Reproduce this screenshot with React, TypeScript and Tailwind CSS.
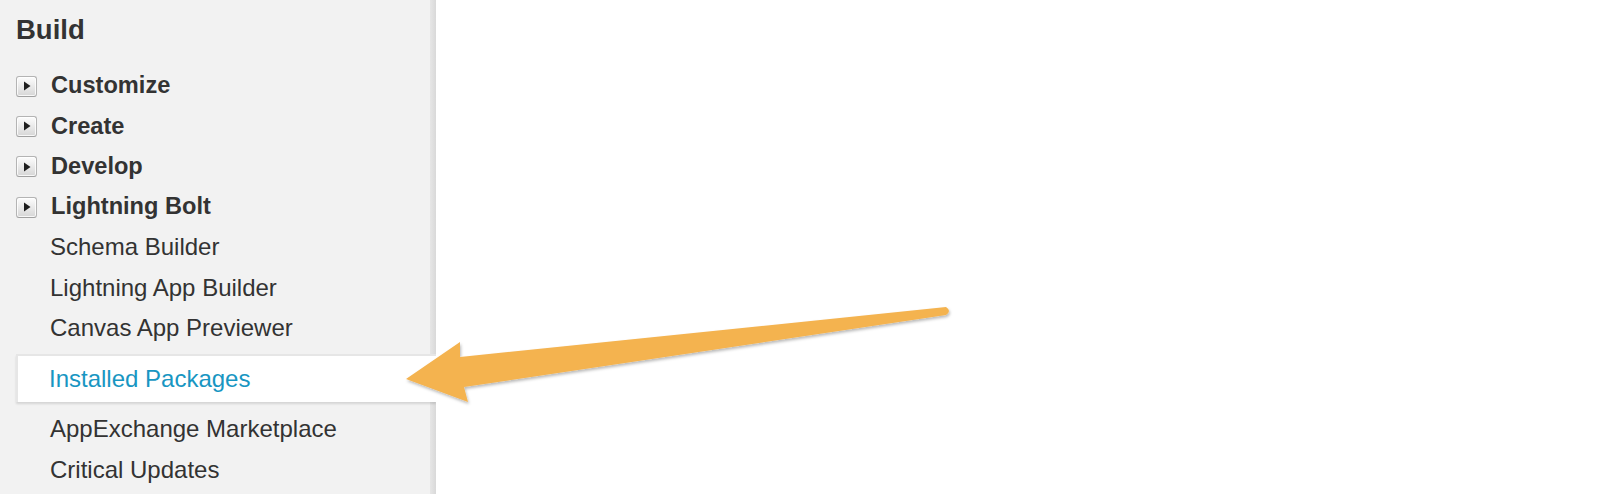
import React from 'react';

const font = { fontFamily: '"Liberation Sans", Arial, Helvetica, sans-serif' };

const groups = ['Customize', 'Create', 'Develop', 'Lightning Bolt'];
const linksTop = ['Schema Builder', 'Lightning App Builder', 'Canvas App Previewer'];
const linksBottom = ['AppExchange Marketplace', 'Critical Updates'];

function ExpandBox() {
  return (
    <span className="flex h-[21px] w-[21px] shrink-0 items-center justify-center rounded-[3px] border border-[#b4b4b4] border-b-[#a0a0a0] bg-gradient-to-b from-[#fdfdfd] to-[#d6d6d6] shadow-[inset_0_0_0_1px_rgba(255,255,255,0.8)]">
      <svg width="8" height="10" viewBox="0 0 8 10">
        <path d="M1 0.5 L7.5 5 L1 9.5 Z" fill="#1e1e1e" />
      </svg>
    </span>
  );
}

function Arrow() {
  // annotation drawn on top of the page
  return (
    <svg className="pointer-events-none absolute left-0 top-0" width="1600" height="494" viewBox="0 0 1600 494">
      <defs>
        <filter id="arrowShadow" x="-10%" y="-30%" width="120%" height="160%">
          <feDropShadow dx="1" dy="2" stdDeviation="1.5" floodColor="#000" floodOpacity="0.28" />
        </filter>
      </defs>
      <path
        d="M406 379 L460 342 L460 357 L946 307 Q952 311 946 315 L464 387 L468 402 Z"
        fill="#f4b350"
        filter="url(#arrowShadow)"
      />
    </svg>
  );
}

export default function App() {
  return (
    <div className="relative flex h-[494px] w-full overflow-hidden bg-white text-[#333]" style={font}>
      <aside className="w-[436px] shrink-0 bg-[linear-gradient(to_right,#f2f2f2_430px,#e6e6e6_430px,#d9d9d9_436px)]">
        <div className="flex h-[60px] items-center pl-[16px]">
          <h2 className="text-[27.5px] font-bold leading-none">Build</h2>
        </div>

        <ul className="mt-[6px]">
          {groups.map((g) => (
            <li key={g} className="flex h-[40.33px] items-center gap-[14px] pl-[16px]">
              <ExpandBox />
              <span className="text-[23.6px] font-bold leading-none">{g}</span>
            </li>
          ))}
          {linksTop.map((l) => (
            <li key={l} className="flex h-[40.33px] items-center pl-[50px]">
              <span className="text-[24px] leading-none">{l}</span>
            </li>
          ))}
          <li className="ml-[16px] mt-[6px] flex h-[48px] items-center border-l-2 border-t-2 border-[#e6e6e6] bg-white pl-[31px] shadow-[0_2px_2px_rgba(0,0,0,0.12)]">
            <span className="text-[24px] leading-none text-[#1896c2]">Installed Packages</span>
          </li>
          <li className="mt-[7px] flex h-[40.33px] items-center pl-[50px]">
            <span className="text-[24px] leading-none">{linksBottom[0]}</span>
          </li>
          <li className="flex h-[40.33px] items-center pl-[50px]">
            <span className="text-[24px] leading-none">{linksBottom[1]}</span>
          </li>
        </ul>
      </aside>

      <main className="flex-1 bg-white" />

      <Arrow />
    </div>
  );
}
